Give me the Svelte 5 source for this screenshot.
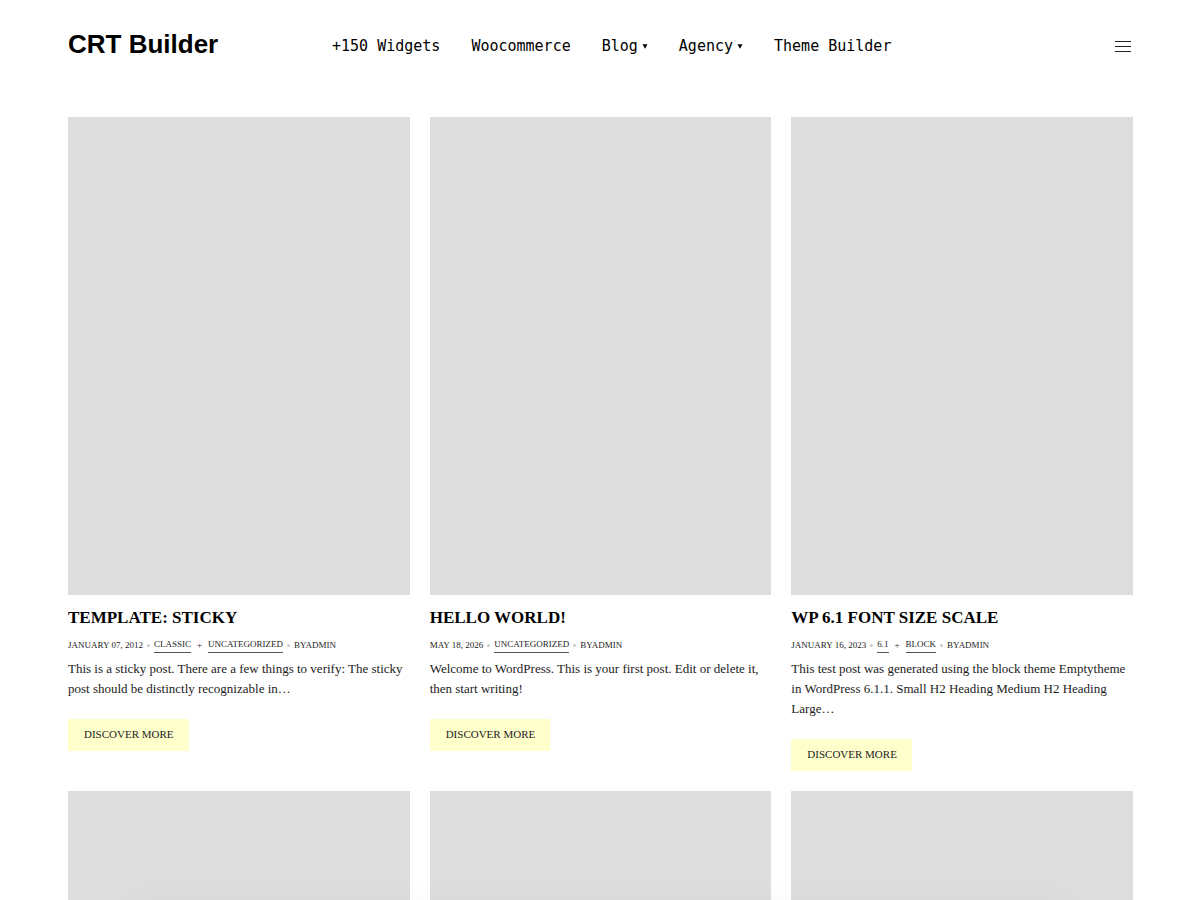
<script>
  const menu = [
    { label: '+150 Widgets' },
    { label: 'Woocommerce' },
    { label: 'Blog', dropdown: true },
    { label: 'Agency', dropdown: true },
    { label: 'Theme Builder' }
  ];

  const posts = [
    {
      title: 'Template: Sticky',
      date: 'January 07, 2012',
      categories: ['Classic', 'Uncategorized'],
      excerpt: 'This is a sticky post. There are a few things to verify: The sticky post should be distinctly recognizable in…'
    },
    {
      title: 'Hello world!',
      date: 'May 18, 2026',
      categories: ['Uncategorized'],
      excerpt: 'Welcome to WordPress. This is your first post. Edit or delete it, then start writing!'
    },
    {
      title: 'WP 6.1 Font size scale',
      date: 'January 16, 2023',
      categories: ['6.1', 'Block'],
      excerpt: 'This test post was generated using the block theme Emptytheme in WordPress 6.1.1. Small H2 Heading Medium H2 Heading Large…'
    }
  ];
</script>

<header class="site-header">
  <a class="logo" href="#home">CRT Builder</a>

  <nav class="menu" aria-label="Main">
    {#each menu as item}
      <a href="#menu">
        {item.label}
        {#if item.dropdown}
          <svg class="caret" viewBox="0 0 6 5" aria-hidden="true">
            <path d="M0.5 0.3h5L3 4.8z" fill="currentColor" />
          </svg>
        {/if}
      </a>
    {/each}
  </nav>

  <button class="toggle" type="button" aria-label="Open menu">
    <svg viewBox="0 0 16 13" aria-hidden="true">
      <path d="M0 1.5h16M0 6.5h16M0 11.5h16" stroke="currentColor" stroke-width="1" />
    </svg>
  </button>
</header>

<main class="grid">
  {#each posts as post}
    <article>
      <div class="thumb"></div>
      <h2><a href="#post">{post.title}</a></h2>
      <div class="meta">
        <span>{post.date}</span>
        <span class="dot"></span>
        <span class="cats">
          {#each post.categories as category, i}
            {#if i > 0}<span>+</span>{/if}
            <a href="#category">{category}</a>
          {/each}
        </span>
        <span class="dot"></span>
        <span>by<a href="#author">admin</a></span>
      </div>
      <p>{post.excerpt}</p>
      <a class="more" href="#post">Discover more</a>
    </article>
  {/each}
  {#each posts as post}
    <div class="thumb"></div>
  {/each}
</main>

<div class="bottom-shade"></div>

<style>
  :global(body) {
    margin: 0;
    background: #fff;
    color: #1c1c1c;
    font-family: "Liberation Serif", "Times New Roman", serif;
    text-rendering: optimizeLegibility;
  }

  a {
    color: inherit;
    text-decoration: none;
  }

  .site-header {
    display: grid;
    grid-template-columns: 264px 1fr auto;
    align-items: center;
    padding: 27px 69px 0 68px;
    color: #000;
  }

  .logo {
    padding-bottom: 2px;
    font: bold 26px/34px "Liberation Sans", Arial, sans-serif;
  }

  .menu {
    display: flex;
    gap: 31px;
    padding-top: 2px;
    font: 15px/34px "DejaVu Sans Mono", monospace;
    white-space: nowrap;
  }

  .menu a {
    display: flex;
    align-items: center;
    gap: 4px;
  }

  .caret {
    width: 6px;
    height: 5px;
  }

  .toggle {
    display: flex;
    padding: 2px 0 0;
    border: 0;
    background: none;
    color: #222;
    cursor: pointer;
  }

  .toggle svg {
    width: 16px;
    height: 13px;
  }

  .grid {
    display: grid;
    grid-template-columns: repeat(3, 1fr);
    gap: 20px;
    align-items: start;
    padding: 54px 67px 20px 68px;
  }

  .thumb {
    aspect-ratio: 5 / 7;
    background: #ddd;
  }

  h2 {
    margin: 12px 0 0;
    color: #000;
    font-size: 17px;
    line-height: 22px;
    text-transform: uppercase;
  }

  .meta {
    display: flex;
    align-items: center;
    gap: 4px;
    margin-top: 8px;
    font-size: 9px;
    line-height: 16px;
    text-transform: uppercase;
  }

  .dot {
    width: 3px;
    height: 3px;
    border-radius: 50%;
    background: #ccc;
  }

  .cats {
    display: flex;
    gap: 6px;
  }

  .cats a {
    border-bottom: 1px solid #555;
    line-height: 15px;
  }

  p {
    margin: 6px 0 20px;
    font-size: 13px;
    line-height: 20px;
  }

  .more {
    display: inline-block;
    padding: 7px 15px 9px 16px;
    background: #ffc;
    font-size: 11px;
    line-height: 16px;
    text-transform: uppercase;
  }

  .bottom-shade {
    position: fixed;
    right: 12%;
    bottom: 0;
    left: 12%;
    height: 0;
    box-shadow: 0 10px 30px 10px rgba(0, 0, 0, 0.03);
    pointer-events: none;
  }
</style>
